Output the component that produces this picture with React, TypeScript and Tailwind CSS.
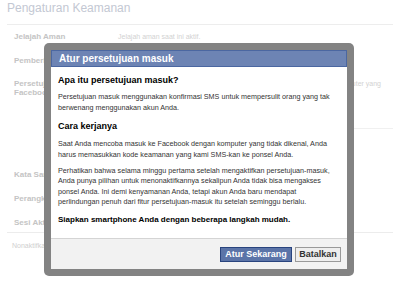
import React from "react";

const font = { fontFamily: '"Liberation Sans", Arial, sans-serif' };

type RowProps = {
  label: React.ReactNode;
  value?: React.ReactNode;
  className?: string;
};
function Row({ label, value, className }: RowProps): React.ReactNode {
  return (
    <div className={`flex ${className ?? ""}`}>
      <div className="w-[111px] shrink-0 pl-[7px] text-[8px] font-bold leading-[9px] text-[#c4c4c4]">
        {label}
      </div>
      <div className="flex-1 text-[7px] leading-[9px] text-[#d2d2d2]">{value}</div>
    </div>
  );
}

function Background(): React.ReactNode {
  return (
    <div className="flex flex-col px-[7px]">
      <h1 className="h-[25px] border-b border-[#ededed] pt-[1px] text-[12px] leading-[14px] text-[#c3c8d3]">
        Pengaturan Keamanan
      </h1>
      <Row className="h-[24px] pt-[7px]" label="Jelajah Aman" value="Jelajah aman saat ini aktif." />
      <Row className="h-[24px] pt-[7px]" label="Pemberitahuan Masuk" value="Pemberitahuan masuk aktif." />
      <div className="flex h-[56px] pt-[6px]">
        <div className="w-[111px] shrink-0 pl-[7px] text-[8px] font-bold leading-[9px] text-[#c4c4c4]">
          Persetujuan Masuk
          <br />
          Facebook
        </div>
        <div className="flex-1 border-b border-[#f0f0f0] pr-[12px] text-right text-[7px] leading-[9px] text-[#d2d2d2]">
          Wajibkan kode keamanan untuk mengakses akun Anda dari komputer yang
        </div>
      </div>
      <Row className="h-[23px] pt-[35px]" label="" />
      <Row className="h-[23px] pt-[6px]" label="Kata Sandi Aplikasi" />
      <Row className="h-[24px] pt-[7px]" label="Perangkat Dikenal" />
      <Row className="h-[22px] border-b border-[#ececec] pt-[7px]" label="Sesi Aktif" />
      <div className="pl-[5px] pt-[8px] text-[7px] leading-[9px] text-[#cfcfcf]">
        Nonaktifkan akun Anda.
      </div>
    </div>
  );
}

type LinesProps = { lines: string[]; className: string };
function Lines({ lines, className }: LinesProps): React.ReactNode {
  return (
    <div className={className}>
      {lines.map((line, i) => (
        <span key={i} className="block whitespace-nowrap">
          {line}
        </span>
      ))}
    </div>
  );
}

function Dialog(): React.ReactNode {
  return (
    <div className="absolute left-[44px] top-[43px] w-[310px] rounded-[5px] bg-[#838383] p-[7px]">
      <div className="flex flex-col bg-white">
        <div className="h-[17px] border border-[#4b67a1] bg-[#6d84b4] pl-[7px] text-[10px] font-bold leading-[15px] text-white">
          Atur persetujuan masuk
        </div>

        <div className="flex h-[171px] flex-col px-[7px] pt-[7px] text-[#333]">
          <h2 className="text-[9px] font-bold leading-[12px] text-black">
            Apa itu persetujuan masuk?
          </h2>
          <Lines
            className="mt-[4.5px] text-[7.2px] leading-[11px]"
            lines={[
              "Persetujuan masuk menggunakan konfirmasi SMS untuk mempersulit orang yang tak",
              "berwenang menggunakan akun Anda.",
            ]}
          />
          <h2 className="mt-[7.5px] text-[9px] font-bold leading-[12px] text-black">
            Cara kerjanya
          </h2>
          <Lines
            className="mt-[5.5px] text-[7.2px] leading-[11px]"
            lines={[
              "Saat Anda mencoba masuk ke Facebook dengan komputer yang tidak dikenal, Anda",
              "harus memasukkan kode keamanan yang kami SMS-kan ke ponsel Anda.",
            ]}
          />
          <Lines
            className="mt-[6px] text-[7.2px] leading-[10.5px]"
            lines={[
              "Perhatikan bahwa selama minggu pertama setelah mengaktifkan persetujuan-masuk,",
              "Anda punya pilihan untuk menonaktifkannya sekalipun Anda tidak bisa mengakses",
              "ponsel Anda. Ini demi kenyamanan Anda, tetapi akun Anda baru mendapat",
              "perlindungan penuh dari fitur persetujuan-masuk itu setelah seminggu berlalu.",
            ]}
          />
          <p className="mt-[6px] text-[8px] font-bold leading-[11px] text-black">
            Siapkan smartphone Anda dengan beberapa langkah mudah.
          </p>
        </div>

        <div className="flex h-[31px] items-start justify-end gap-[3px] border-t border-[#d4d4d4] bg-[#f2f2f2] pr-[6px] pt-[8px]">
          <button className="h-[15px] w-[72px] border border-[#29447e] bg-[#5b74a8] text-[9px] font-bold leading-[13px] text-white">
            Atur Sekarang
          </button>
          <button className="h-[15px] w-[46px] border border-[#999] bg-[#eeeeee] text-[9px] font-bold leading-[13px] text-[#333]">
            Batalkan
          </button>
        </div>
      </div>
    </div>
  );
}

export default function App(): React.ReactNode {
  return (
    <div className="relative h-[296px] w-[400px] overflow-hidden bg-white" style={font}>
      <Background />
      <Dialog />
    </div>
  );
}
